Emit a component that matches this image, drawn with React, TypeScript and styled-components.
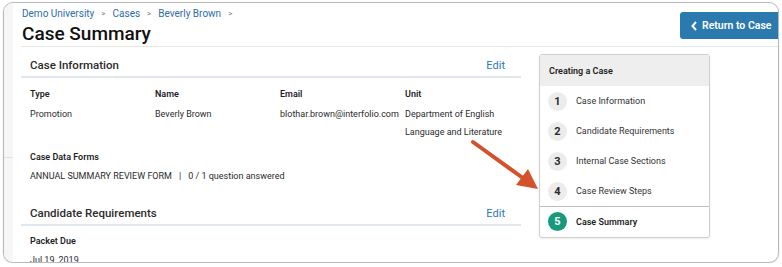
import styled, { createGlobalStyle } from "styled-components";

const GlobalStyle = createGlobalStyle`
  html, body {
    margin: 0;
    padding: 0;
    background: #ffffff;
    font-family: Roboto, "Liberation Sans", Arial, sans-serif;
    color: #333;
  }
  * {
    box-sizing: border-box;
  }
`;

const Frame = styled.div`
  position: relative;
  margin: 2px 0 0 3px;
  width: 776px;
  height: 261px;
  border: 1px solid #b9b9b9;
  border-radius: 10px;
  overflow: hidden;
  display: flex;
  background: #fff;
  box-shadow: 0 1px 2px rgba(0, 0, 0, 0.12);
`;

const LeftRail = styled.div`
  width: 9px;
  flex-shrink: 0;
  background: #f6f6f6;
  position: relative;

  &::after {
    content: "";
    position: absolute;
    left: 0;
    right: 0;
    top: 154px;
    border-top: 1px solid #e2e2e2;
  }
`;

const Page = styled.div`
  flex: 1;
  padding-left: 8px;
  display: flex;
  flex-direction: column;
`;

const Header = styled.div`
  height: 45px;
  border-bottom: 1px solid #e6e6e6;
  display: flex;
  justify-content: space-between;
  align-items: flex-start;
`;

const TitleBlock = styled.div`
  padding: 4px 0 0 1px;
`;

const Breadcrumb = styled.div`
  line-height: 13px;
  display: flex;
  align-items: center;
  gap: 7px;
`;

const Crumb = styled.span<{ $sep?: boolean }>`
  color: ${(p) => (p.$sep ? "#777" : "#2b6ea8")};
  font-size: ${(p) => (p.$sep ? "8px" : "10px")};
`;

const Title = styled.h1`
  margin: 2px 0 0;
  font-size: 19px;
  line-height: 24px;
  font-weight: 500;
  color: #111;
`;

const ReturnButton = styled.button`
  margin: 9px -6px 0 0;
  width: 104px;
  height: 27px;
  border: none;
  border-radius: 3px;
  background: #2a7ab0;
  color: #fff;
  font-family: inherit;
  font-size: 10.5px;
  font-weight: 600;
  display: flex;
  align-items: center;
  gap: 5px;
  padding: 0 0 0 11px;
`;

const Body = styled.div`
  display: flex;
  gap: 18px;
`;

const Main = styled.div`
  width: 500px;
`;

const SectionHeader = styled.div<{ $gap?: number }>`
  margin-top: ${(p) => p.$gap ?? 0}px;
  height: 31px;
  padding: 7px 16px 0 9px;
  border-bottom: 2px solid #e1e6ed;
  display: flex;
  align-items: center;
  justify-content: space-between;
`;

const SectionTitle = styled.span`
  font-size: 11.5px;
  font-weight: 500;
  color: #2b2b2b;
`;

const EditLink = styled.span`
  font-size: 11px;
  color: #2a79b5;
`;

const InfoGrid = styled.div`
  display: grid;
  grid-template-columns: repeat(4, 125px);
  row-gap: 3px;
  padding: 8px 9px 0;
`;

const Label = styled.div<{ $top?: number }>`
  margin-top: ${(p) => p.$top ?? 0}px;
  font-size: 9px;
  line-height: 16px;
  font-weight: 600;
  color: #1f1f1f;
`;

const Value = styled.div<{ $top?: number }>`
  margin-top: ${(p) => p.$top ?? 0}px;
  font-size: 9px;
  line-height: 18px;
  color: #2b2b2b;
`;

const Field = styled.div`
  padding: 0 9px;
`;

const FormLine = styled.div`
  margin-top: 3px;
  font-size: 9px;
  line-height: 16px;
  color: #2b2b2b;
  display: flex;
  gap: 7px;
`;

const Sidebar = styled.div`
  margin-top: 7px;
  width: 171px;
  border: 1px solid #cfcfcf;
  border-radius: 3px;
  box-shadow: 0 1px 2px rgba(0, 0, 0, 0.08);
  background: #fff;
  align-self: flex-start;
  padding-bottom: 1px;
`;

const SidebarHeader = styled.div`
  height: 31px;
  background: #eeeeee;
  padding: 0 9px;
  display: flex;
  align-items: center;
  font-size: 9px;
  font-weight: 600;
  color: #222;
`;

const Step = styled.div<{ $active?: boolean }>`
  height: 30px;
  padding: 0 8px;
  display: flex;
  align-items: center;
  gap: 9px;
  border-top: ${(p) => (p.$active ? "1px solid #bdbdbd" : "none")};
  font-size: 9px;
  font-weight: ${(p) => (p.$active ? 600 : 400)};
  color: ${(p) => (p.$active ? "#1f1f1f" : "#333")};
`;

const StepNumber = styled.span<{ $active?: boolean }>`
  width: 19px;
  height: 19px;
  border-radius: 50%;
  background: ${(p) => (p.$active ? "#17997b" : "#ececec")};
  color: ${(p) => (p.$active ? "#fff" : "#2a2a2a")};
  font-size: 11px;
  font-weight: 700;
  display: flex;
  align-items: center;
  justify-content: center;
`;

const Callout = styled.svg`
  position: absolute;
  left: -3px;
  top: -2px;
  pointer-events: none;
`;

const steps = [
  "Case Information",
  "Candidate Requirements",
  "Internal Case Sections",
  "Case Review Steps",
];

export default function App() {
  return (
    <>
      <GlobalStyle />
      <Frame>
        <LeftRail />
        <Page>
          <Header>
            <TitleBlock>
              <Breadcrumb>
                <Crumb>Demo University</Crumb>
                <Crumb $sep>&gt;</Crumb>
                <Crumb>Cases</Crumb>
                <Crumb $sep>&gt;</Crumb>
                <Crumb>Beverly Brown</Crumb>
                <Crumb $sep>&gt;</Crumb>
              </Breadcrumb>
              <Title>Case Summary</Title>
            </TitleBlock>
            <ReturnButton>
              <svg width="6" height="10" viewBox="0 0 6 10">
                <path
                  d="M5 1 L1.5 5 L5 9"
                  fill="none"
                  stroke="#fff"
                  strokeWidth="2"
                />
              </svg>
              Return to Case
            </ReturnButton>
          </Header>
          <Body>
            <Main>
              <SectionHeader>
                <SectionTitle>Case Information</SectionTitle>
                <EditLink>Edit</EditLink>
              </SectionHeader>
              <InfoGrid>
                <Label>Type</Label>
                <Label>Name</Label>
                <Label>Email</Label>
                <Label>Unit</Label>
                <Value>Promotion</Value>
                <Value>Beverly Brown</Value>
                <Value>blothar.brown@interfolio.com</Value>
                <Value>
                  Department of English
                  <br />
                  Language and Literature
                </Value>
              </InfoGrid>
              <Field>
                <Label $top={8}>Case Data Forms</Label>
                <FormLine>
                  <span>ANNUAL SUMMARY REVIEW FORM</span>
                  <span>|</span>
                  <span>0 / 1 question answered</span>
                </FormLine>
              </Field>
              <SectionHeader $gap={11}>
                <SectionTitle>Candidate Requirements</SectionTitle>
                <EditLink>Edit</EditLink>
              </SectionHeader>
              <Field>
                <Label $top={7}>Packet Due</Label>
                <Value $top={2}>Jul 19, 2019</Value>
              </Field>
            </Main>
            <Sidebar>
              <SidebarHeader>Creating a Case</SidebarHeader>
              {steps.map((s, i) => (
                <Step key={s}>
                  <StepNumber>{i + 1}</StepNumber>
                  {s}
                </Step>
              ))}
              <Step $active>
                <StepNumber $active>5</StepNumber>
                Case Summary
              </Step>
            </Sidebar>
          </Body>
        </Page>
        <Callout width="782" height="267" viewBox="0 0 782 267">
          <line
            x1="472"
            y1="141"
            x2="524"
            y2="178.5"
            stroke="#d3522c"
            strokeWidth="4"
            strokeLinecap="round"
          />
          <polygon points="537,188 515,184 527,168" fill="#d3522c" />
        </Callout>
      </Frame>
    </>
  );
}
